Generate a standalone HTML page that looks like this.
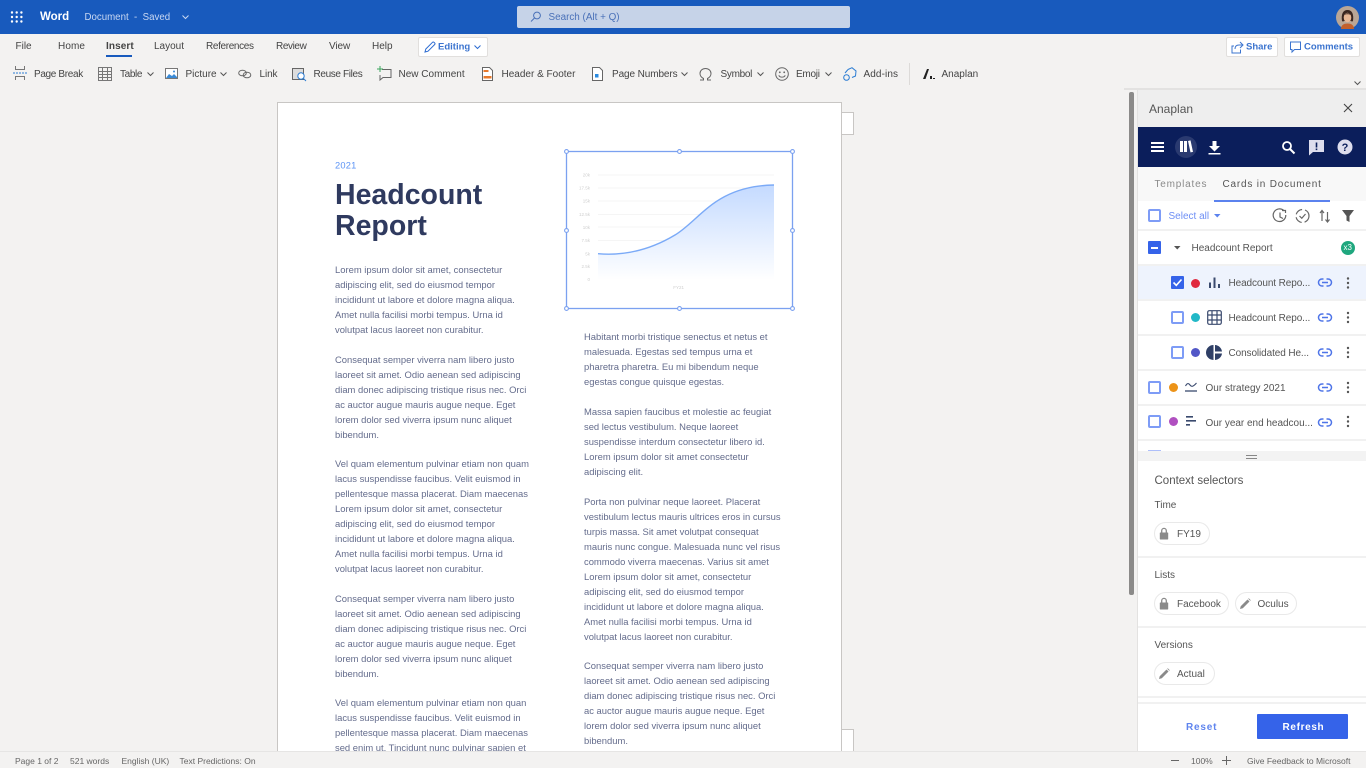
<!DOCTYPE html>
<html lang="en"><head><meta charset="utf-8"><title>Word - Anaplan</title>
<style>
*{box-sizing:border-box}
html,body{margin:0;padding:0;width:1366px;height:768px;overflow:hidden;background:#f3f2f1;font-family:"Liberation Sans",sans-serif}
body{filter:blur(.35px)}
.a{position:absolute}
.t{position:absolute;white-space:nowrap;transform:translateY(calc(-50% + 1px));line-height:1.2}
.r{font-size:10px;color:#444}
.p{font-size:9.42px;color:#646c8c;line-height:15px;white-space:pre;position:absolute}
svg{position:absolute;overflow:visible}
.line{position:absolute;left:1138px;width:228px;height:2px;background:#f1f1f1}
.cb{position:absolute;width:13px;height:13px;border:2px solid #7e9cf6;border-radius:2px;background:#fff}
.dot{position:absolute;width:9px;height:9px;border-radius:50%}
.lbl{font-size:10px;color:#555}
.chip{position:absolute;height:23px;border:1px solid #e9e9e9;border-radius:12px;background:#fff}
</style></head><body>

<!-- title bar -->
<div class="a" style="left:0;top:0;width:1366px;height:34px;background:#185abd"></div>
<svg style="left:0;top:0" width="40" height="34" fill="#fff">
<circle cx="12" cy="12.500" r="1.200"/><circle cx="16.700" cy="12.500" r="1.200"/><circle cx="21.400" cy="12.500" r="1.200"/>
<circle cx="12" cy="17" r="1.200"/><circle cx="16.700" cy="17" r="1.200"/><circle cx="21.400" cy="17" r="1.200"/>
<circle cx="12" cy="21.500" r="1.200"/><circle cx="16.700" cy="21.500" r="1.200"/><circle cx="21.400" cy="21.500" r="1.200"/>
</svg>
<div class="t" style="left:40px;top:17px;font-size:11.500px;font-weight:bold;color:#fff">Word</div>
<div class="t" style="left:84.500px;top:17px;font-size:9.700px;color:#c9d8f2">Document &nbsp;-&nbsp; Saved</div>
<svg style="left:182px;top:15px" width="8" height="5"><path d="M.5.500 3.500 3.500 6.500.500" fill="none" stroke="#c9d8f2"/></svg>
<div class="a" style="left:517px;top:6px;width:333px;height:22px;background:#c6d3e8;border-radius:2px"></div>
<svg style="left:530px;top:11px" width="12" height="12"><circle cx="7" cy="4.500" r="3.400" fill="none" stroke="#4a71b8" stroke-width="1"/><path d="M4.500 7 1 10.500" stroke="#4a71b8" stroke-width="1"/></svg>
<div class="t" style="left:548.500px;top:17px;font-size:9.900px;color:#4a71b8">Search (Alt + Q)</div>
<svg style="left:1336px;top:6px" width="23" height="23" viewBox="0 0 23 23">
<circle cx="11.500" cy="11.500" r="11.500" fill="#b9a696"/><path d="M5 23c0-4 3-5.500 6.500-5.500S18 19 18 23z" fill="#c2602c"/>
<path d="M6 15C5 8 7 4 11.500 4S18 8 17 15c-1 1-2 0-2 0l-7 0s-1 1-2 0z" fill="#3a2620"/><ellipse cx="11.500" cy="11.500" rx="3.800" ry="4.800" fill="#e7b795"/><path d="M7.500 9c2-2 6-2.500 8 0-2-1-6-1-8 0z" fill="#3a2620"/>
</svg>

<!-- menu -->
<div class="t r" style="left:15.500px;top:45.500px">File</div>
<div class="t r" style="left:58px;top:45.500px;letter-spacing:.1px">Home</div>
<div class="t r" style="left:106px;top:45.500px;font-weight:bold;letter-spacing:.1px">Insert</div>
<div class="a" style="left:106px;top:54.500px;width:26px;height:2px;background:#185abd"></div>
<div class="t r" style="left:154px;top:45.500px">Layout</div>
<div class="t r" style="left:206px;top:45.500px;letter-spacing:-.35px">References</div>
<div class="t r" style="left:276px;top:45.500px;letter-spacing:-.4px">Review</div>
<div class="t r" style="left:329px;top:45.500px;letter-spacing:-.1px">View</div>
<div class="t r" style="left:372px;top:45.500px">Help</div>
<div class="a" style="left:418px;top:37px;width:70px;height:20px;background:#fff;border:1px solid #e1dfdd;border-radius:2px"></div>
<svg style="left:424px;top:41px" width="12" height="12"><path d="M1 11l.8-3L8.500 1.300a1 1 0 0 1 1.500 0l.7.7a1 1 0 0 1 0 1.500L4 10.200z" fill="none" stroke="#2b6bd1" stroke-width="1"/></svg>
<div class="t" style="left:438px;top:46px;font-size:9.500px;font-weight:bold;color:#3b74cf">Editing</div>
<svg style="left:474px;top:45px" width="8" height="5"><path d="M.5.500 3.500 3.500 6.500.500" fill="none" stroke="#2b6bd1"/></svg>
<div class="a" style="left:1226px;top:37px;width:52px;height:20px;background:#fff;border:1px solid #e1dfdd;border-radius:2px"></div>
<svg style="left:1231px;top:41px" width="13" height="13"><path d="M9 1l3 3-3 3M12 4H8C5 4 4 6 4 8M9.500 8.500V12H1V5h2" fill="none" stroke="#3b74cf" stroke-width="1"/></svg>
<div class="t" style="left:1246px;top:46px;font-size:9.500px;font-weight:bold;color:#3b74cf">Share</div>
<div class="a" style="left:1284px;top:37px;width:76px;height:20px;background:#fff;border:1px solid #e1dfdd;border-radius:2px"></div>
<svg style="left:1290px;top:41px" width="12" height="12"><path d="M.5 1h10v7.500H4.500l-2.500 2.500V8.500H.5z" fill="none" stroke="#3b74cf" stroke-width="1"/></svg>
<div class="t" style="left:1304px;top:46px;font-size:9.500px;font-weight:bold;color:#3b74cf">Comments</div>

<!-- ribbon -->
<svg style="left:13px;top:66px" width="14" height="14" fill="none"><path d="M2.500 0v3.500h9V0M2.500 14v-3.500h9V14" stroke="#777"/><path d="M0 7h14" stroke="#2b7cd3" stroke-dasharray="2 1"/></svg>
<div class="t r" style="left:34px;top:74px;letter-spacing:-.34px">Page Break</div>
<svg style="left:98px;top:67px" width="14" height="14"><path d="M.5.500h13v13H.500zM.500 4.500h13M.500 7.500h13M.500 10.500h13M4.500 1v13M9.500 1v13" fill="none" stroke="#777"/></svg>
<div class="t r" style="left:120px;top:74px;letter-spacing:-.36px">Table</div>
<svg style="left:147px;top:72px" width="8" height="5"><path d="M.5.500 3.500 3.500 6.500.500" fill="none" stroke="#555"/></svg>
<svg style="left:165px;top:68px" width="13" height="12"><rect x=".5" y=".5" width="12" height="10" fill="#fff" stroke="#777"/><path d="M1 10l3-4 3 2 2-2 3 3v1z" fill="#3a8ad6"/><circle cx="9" cy="3.500" r="1" fill="#3a8ad6"/></svg>
<div class="t r" style="left:185.500px;top:74px">Picture</div>
<svg style="left:220px;top:72px" width="8" height="5"><path d="M.5.500 3.500 3.500 6.500.500" fill="none" stroke="#555"/></svg>
<svg style="left:238px;top:69px" width="14" height="10"><ellipse cx="4.500" cy="4" rx="3.800" ry="2.800" fill="none" stroke="#666"/><ellipse cx="9" cy="6" rx="3.800" ry="2.800" fill="none" stroke="#666"/></svg>
<div class="t r" style="left:259.500px;top:74px;letter-spacing:-.1px">Link</div>
<svg style="left:292px;top:67px" width="15" height="15"><rect x=".5" y="1.500" width="11" height="11" fill="#ddd" stroke="#666"/><circle cx="9" cy="9" r="3.200" fill="#fff" stroke="#2b7cd3"/><path d="M11.500 11.500 14 14" stroke="#2b7cd3"/></svg>
<div class="t r" style="left:313.500px;top:74px;letter-spacing:-.36px">Reuse Files</div>
<svg style="left:377px;top:66px" width="15" height="15"><path d="M5 3.500h9v8H6l-3 2.500v-5" fill="none" stroke="#666"/><path d="M3 0v6M0 3h6" stroke="#3ba55d"/></svg>
<div class="t r" style="left:398.500px;top:74px">New Comment</div>
<svg style="left:482px;top:67px" width="11" height="14"><path d="M.5.500h7l3 3v10H.5z" fill="#fff" stroke="#666"/><rect x="1.500" y="3" width="5" height="2" fill="#e8792b"/><rect x="1.500" y="9" width="8" height="2.500" fill="#e8792b"/></svg>
<div class="t r" style="left:501.500px;top:74px">Header &amp; Footer</div>
<svg style="left:592px;top:67px" width="11" height="14"><path d="M.5.500h7l3 3v10H.5z" fill="#fff" stroke="#666"/><rect x="3" y="7" width="3.500" height="3.500" fill="#2b8be0"/></svg>
<div class="t r" style="left:612px;top:74px;letter-spacing:-.1px">Page Numbers</div>
<svg style="left:681px;top:72px" width="8" height="5"><path d="M.5.500 3.500 3.500 6.500.500" fill="none" stroke="#555"/></svg>
<svg style="left:699px;top:68px" width="13" height="13"><path d="M1 12h3.500V10.500C2.500 9.500 1 7.500 1 5.500 1 2.500 3.500.5 6.500.5s5.500 2 5.500 5c0 2-1.500 4-3.500 5V12H12" fill="none" stroke="#666"/></svg>
<div class="t r" style="left:720.500px;top:74px;letter-spacing:-.3px">Symbol</div>
<svg style="left:757px;top:72px" width="8" height="5"><path d="M.5.500 3.500 3.500 6.500.500" fill="none" stroke="#555"/></svg>
<svg style="left:775px;top:67px" width="14" height="14"><circle cx="7" cy="7" r="6.300" fill="none" stroke="#666"/><circle cx="4.800" cy="5.300" r=".9" fill="#666"/><circle cx="9.200" cy="5.300" r=".9" fill="#666"/><path d="M3.800 8.300c1 2.500 5.400 2.500 6.400 0" fill="none" stroke="#666"/></svg>
<div class="t r" style="left:796px;top:74px;letter-spacing:-.25px">Emoji</div>
<svg style="left:825px;top:72px" width="8" height="5"><path d="M.5.500 3.500 3.500 6.500.500" fill="none" stroke="#555"/></svg>
<svg style="left:843px;top:67px" width="14" height="14" fill="none" stroke="#2b7cd3"><path d="M5 2.500 9 .7 13 4l-.5 5-3.500 1.500"/><circle cx="3.500" cy="10.500" r="2.800"/><path d="M5 2.500 2 6"/></svg>
<div class="t r" style="left:863.500px;top:74px;letter-spacing:.1px">Add-ins</div>
<div class="a" style="left:909px;top:63px;width:1px;height:22px;background:#dcdad8"></div>
<svg style="left:923px;top:69px" width="12" height="10"><path d="M0 10 4 0h2L2.500 10z" fill="#222"/><path d="M7 7h2v3H7zM10 9h2v1h-2z" fill="#222"/></svg>
<div class="t r" style="left:941.500px;top:74px">Anaplan</div>
<svg style="left:1354px;top:80.500px" width="8" height="5"><path d="M.5.500 3.500 3.500 6.500.500" fill="none" stroke="#555"/></svg>
<div class="a" style="left:1124px;top:88px;width:242px;height:2px;background:#e3e2e1"></div>

<!-- document -->
<div class="a" style="left:841px;top:112px;width:13px;height:23px;background:#fff;border:1px solid #c8c6c4;border-left:0"></div>
<div class="a" style="left:841px;top:729px;width:13px;height:24px;background:#fff;border:1px solid #c8c6c4;border-left:0"></div>
<div class="a" style="left:277px;top:102px;width:565px;height:660px;background:#fff;border:1px solid #c8c6c4"></div>
<div class="t" style="left:335px;top:165px;font-size:9.300px;color:#5b93f5;letter-spacing:.2px">2021</div>
<div class="a" style="left:335px;top:179.500px;font-size:28.500px;line-height:31px;font-weight:bold;color:#2f3a5f;white-space:pre">Headcount
Report</div>

<div class="p" style="left:335px;top:262px">Lorem ipsum dolor sit amet, consectetur
adipiscing elit, sed do eiusmod tempor
incididunt ut labore et dolore magna aliqua.
Amet nulla facilisi morbi tempus. Urna id
volutpat lacus laoreet non curabitur.</div>
<div class="p" style="left:335px;top:352px">Consequat semper viverra nam libero justo
laoreet sit amet. Odio aenean sed adipiscing
diam donec adipiscing tristique risus nec. Orci
ac auctor augue mauris augue neque. Eget
lorem dolor sed viverra ipsum nunc aliquet
bibendum.</div>
<div class="p" style="left:335px;top:456px">Vel quam elementum pulvinar etiam non quam
lacus suspendisse faucibus. Velit euismod in
pellentesque massa placerat. Diam maecenas
Lorem ipsum dolor sit amet, consectetur
adipiscing elit, sed do eiusmod tempor
incididunt ut labore et dolore magna aliqua.
Amet nulla facilisi morbi tempus. Urna id
volutpat lacus laoreet non curabitur.</div>
<div class="p" style="left:335px;top:591px">Consequat semper viverra nam libero justo
laoreet sit amet. Odio aenean sed adipiscing
diam donec adipiscing tristique risus nec. Orci
ac auctor augue mauris augue neque. Eget
lorem dolor sed viverra ipsum nunc aliquet
bibendum.</div>
<div class="p" style="left:335px;top:695px">Vel quam elementum pulvinar etiam non quan
lacus suspendisse faucibus. Velit euismod in
pellentesque massa placerat. Diam maecenas
sed enim ut. Tincidunt nunc pulvinar sapien et</div>

<div class="p" style="left:584px;top:329px">Habitant morbi tristique senectus et netus et
malesuada. Egestas sed tempus urna et
pharetra pharetra. Eu mi bibendum neque
egestas congue quisque egestas.</div>
<div class="p" style="left:584px;top:404px">Massa sapien faucibus et molestie ac feugiat
sed lectus vestibulum. Neque laoreet
suspendisse interdum consectetur libero id.
Lorem ipsum dolor sit amet consectetur
adipiscing elit.</div>
<div class="p" style="left:584px;top:494px">Porta non pulvinar neque laoreet. Placerat
vestibulum lectus mauris ultrices eros in cursus
turpis massa. Sit amet volutpat consequat
mauris nunc congue. Malesuada nunc vel risus
commodo viverra maecenas. Varius sit amet
Lorem ipsum dolor sit amet, consectetur
adipiscing elit, sed do eiusmod tempor
incididunt ut labore et dolore magna aliqua.
Amet nulla facilisi morbi tempus. Urna id
volutpat lacus laoreet non curabitur.</div>
<div class="p" style="left:584px;top:658px">Consequat semper viverra nam libero justo
laoreet sit amet. Odio aenean sed adipiscing
diam donec adipiscing tristique risus nec. Orci
ac auctor augue mauris augue neque. Eget
lorem dolor sed viverra ipsum nunc aliquet
bibendum.</div>

<!-- chart -->
<svg style="left:0;top:0" width="1366" height="768">
<defs><linearGradient id="g" x1="0" y1="0" x2="0" y2="1"><stop offset="0" stop-color="#c4daff"/><stop offset="1" stop-color="#ffffff"/></linearGradient></defs>
<g stroke="#f5f5f5" stroke-width="1"><path d="M598 175H774M598 188H774M598 201H774M598 214.500H774M598 227H774M598 240.500H774M598 254H774M598 266H774M598 279.500H774"/></g>
<path d="M598 253.700C625 256 650 250 675 235C700 220 715 186 774 185V280H598Z" fill="url(#g)"/>
<path d="M598 253.700C625 256 650 250 675 235C700 220 715 186 774 185" fill="none" stroke="#7baaf7" stroke-width="1.400"/>
<g font-size="4.500" fill="#cfcfcf" text-anchor="end" font-family="Liberation Sans">
<text x="590" y="176.500">20k</text><text x="590" y="189.500">17.5k</text><text x="590" y="202.500">15k</text><text x="590" y="216">12.5k</text><text x="590" y="229">10k</text><text x="590" y="242">7.5k</text><text x="590" y="255.500">5k</text><text x="590" y="268">2.5k</text><text x="590" y="281">0</text>
<text x="684" y="289">FY21</text></g>
<rect x="566.500" y="151.500" width="226" height="157" fill="none" stroke="#7ba1f0" stroke-width="1.300"/>
<g fill="#fff" stroke="#7ba1f0" stroke-width="1.100"><circle cx="566.500" cy="151.500" r="1.900"/><circle cx="679.500" cy="151.500" r="1.900"/><circle cx="792.500" cy="151.500" r="1.900"/><circle cx="566.500" cy="230.500" r="1.900"/><circle cx="792.500" cy="230.500" r="1.900"/><circle cx="566.500" cy="308.500" r="1.900"/><circle cx="679.500" cy="308.500" r="1.900"/><circle cx="792.500" cy="308.500" r="1.900"/></g>
</svg>

<!-- scrollbar & panel -->
<div class="a" style="left:1129px;top:92px;width:5px;height:503px;background:#8b8a89;border-radius:2px"></div>
<div class="a" style="left:1137px;top:90px;width:229px;height:661px;background:#fff"></div>
<div class="a" style="left:1137px;top:90px;width:1px;height:661px;background:#e3e2e1"></div>
<div class="a" style="left:1138px;top:90px;width:228px;height:37px;background:#eeeeee"></div>
<div class="t" style="left:1149px;top:108px;font-size:12px;color:#555">Anaplan</div>
<svg style="left:1343px;top:103px" width="10" height="10"><path d="M1 1l8 8M9 1 1 9" stroke="#444" stroke-width="1.100"/></svg>
<div class="a" style="left:1138px;top:127px;width:228px;height:40px;background:#0b1e5b"></div>
<svg style="left:1138px;top:127px" width="228" height="40">
<path d="M13 15h13v2H13zM13 19h13v2H13zM13 23h13v2H13z" fill="#fff"/>
<circle cx="48" cy="20" r="11" fill="#2a3a70"/>
<path d="M42 14h3v11h-3zM46 14h3v11h-3zM50 14l2.500-.6 2.500 11.500-2.500.5z" fill="#fff"/>
<path d="M74.500 14h4v5h3.500l-5.500 5.500L71 19h3.500zM70.500 26h12v1.500h-12z" fill="#fff"/>
<circle cx="149" cy="19" r="4" fill="none" stroke="#fff" stroke-width="1.800"/><path d="M152 22l4.500 4.500" stroke="#fff" stroke-width="2"/>
<path d="M171 13h15v12h-11l-4 3.500z" fill="#dde" /><path d="M177.700 15.500h1.600v5h-1.600zM177.700 21.500h1.600v1.600h-1.600z" fill="#0b1e5b"/>
<circle cx="207" cy="20" r="7.500" fill="#dde"/><text x="207" y="24" text-anchor="middle" font-size="11" font-weight="bold" fill="#0b1e5b" font-family="Liberation Sans">?</text>
</svg>
<div class="a" style="left:1138px;top:167px;width:228px;height:34px;background:#f8f8f8"></div>
<div class="t" style="left:1154.500px;top:183.500px;font-size:10px;color:#8a8a8a;letter-spacing:.8px">Templates</div>
<div class="t" style="left:1222.500px;top:183.500px;font-size:10px;color:#555;letter-spacing:.8px">Cards in Document</div>
<div class="a" style="left:1214px;top:200px;width:116px;height:1.500px;background:#5b82ee"></div>

<div class="cb" style="left:1148px;top:209px"></div>
<div class="t" style="left:1168.500px;top:216px;font-size:10px;color:#6e8ff5">Select all</div>
<svg style="left:1214px;top:214px" width="7" height="4"><path d="M0 0h6.500L3.250 3.500z" fill="#5b82ee"/></svg>
<svg style="left:1272px;top:209px" width="84" height="16" fill="none" stroke="#666" stroke-width="1.200">
<path d="M12 1.800A6.300 6.300 0 1 0 13.800 6M8 3.500V8l3 1.500"/><path d="M10 1.500h3.500V4" />
<circle cx="30.500" cy="7" r="6.500" stroke-dasharray="8 3"/><path d="M27.500 7l2.300 2.300 3.700-4.300"/>
<path d="M50 12V2M48 4l2-2.500L52 4M55.500 3v10M53.500 10.500l2 2.500 2-2.500" />
<path d="M70 1h12l-4.500 6v6l-3-1.500V7z" fill="#555" stroke="none"/>
</svg>
<div class="line" style="top:229px"></div>

<div class="a" style="left:1148px;top:241px;width:13px;height:13px;background:#3563e9;border-radius:1px"></div>
<div class="a" style="left:1151px;top:247px;width:7px;height:1.500px;background:#fff"></div>
<svg style="left:1174px;top:246px" width="7" height="4"><path d="M0 0h6.500L3.250 3.500z" fill="#555"/></svg>
<div class="t lbl" style="left:1191.500px;top:248px">Headcount Report</div>
<div class="a" style="left:1341px;top:241px;width:14px;height:14px;border-radius:50%;background:#1fa77e"></div>
<div class="t" style="left:1343.500px;top:247px;font-size:8px;color:#fff">x3</div>
<div class="line" style="top:264px"></div>

<div class="a" style="left:1138px;top:266px;width:228px;height:33px;background:#eef3fd"></div>
<div class="a" style="left:1171px;top:276px;width:13px;height:13px;background:#3563e9;border-radius:1px"></div>
<svg style="left:1171px;top:276px" width="13" height="13"><path d="M2.500 6.500 5.300 9.300 10.500 3.500" fill="none" stroke="#fff" stroke-width="1.600"/></svg>
<div class="dot" style="left:1191px;top:278.500px;background:#e0283e"></div>
<svg style="left:1208px;top:276px" width="13" height="13"><path d="M1 6.500h2V12H1zM5.500 1.500h2V12h-2zM10 8h2v4h-2z" fill="#3a4a6e"/></svg>
<div class="t lbl" style="left:1228.500px;top:283px;letter-spacing:-.1px">Headcount Repo...</div>
<div class="line" style="top:299px"></div>

<div class="cb" style="left:1171px;top:311px"></div>
<div class="dot" style="left:1191px;top:313px;background:#22b8c7"></div>
<svg style="left:1207px;top:310px" width="15" height="15"><rect x=".7" y=".7" width="13.600" height="13.600" rx="1.500" fill="none" stroke="#3a4a6e" stroke-width="1.200"/><path d="M5 1v13M10 1v13M1 5h13M1 10h13" stroke="#3a4a6e" stroke-width="1.200"/></svg>
<div class="t lbl" style="left:1228.500px;top:318px;letter-spacing:-.1px">Headcount Repo...</div>
<div class="line" style="top:334px"></div>

<div class="cb" style="left:1171px;top:346px"></div>
<div class="dot" style="left:1191px;top:348px;background:#5257c7"></div>
<svg style="left:1207px;top:345px" width="15" height="15"><path d="M6.500 0a7.500 7.500 0 0 0 0 15zM8 0a7.500 7.500 0 0 1 7 6.500H8zM8 8.500h7A7.500 7.500 0 0 1 8 15z" fill="#2f3f66"/></svg>
<div class="t lbl" style="left:1228.500px;top:353px;letter-spacing:-.1px">Consolidated He...</div>
<div class="line" style="top:369px"></div>

<div class="cb" style="left:1148px;top:381px"></div>
<div class="dot" style="left:1168.500px;top:383px;background:#ec9318"></div>
<svg style="left:1185px;top:381px" width="13" height="12"><path d="M.5 5C2 2 3.500 2 5 4S8 6 11.500 2" fill="none" stroke="#3a4a6e" stroke-width="1.100"/><path d="M0 10h12" stroke="#3a4a6e" stroke-width="1.300"/></svg>
<div class="t lbl" style="left:1205.500px;top:388px">Our strategy 2021</div>
<div class="line" style="top:404px"></div>

<div class="cb" style="left:1148px;top:415px"></div>
<div class="dot" style="left:1168.500px;top:417px;background:#b050c0"></div>
<svg style="left:1186px;top:416px" width="11" height="11"><path d="M0 0h7v1.600H0zM0 4h10v1.600H0zM0 8h4v1.600H0z" fill="#3a4a6e"/></svg>
<div class="t lbl" style="left:1205.500px;top:423px;letter-spacing:-.02px">Our year end headcou...</div>
<div class="line" style="top:439px"></div>
<div class="a" style="left:1148px;top:450px;width:13px;height:2px;background:#aebffa"></div>

<svg style="left:1318px;top:277px" width="14" height="155" fill="none" stroke="#4f75e8" stroke-width="1.500">
<path d="M5.500 2H4a3.500 3.500 0 0 0 0 7h1.500M8.500 2H10a3.500 3.500 0 0 1 0 7H8.500M4 5.500h6"/>
<path transform="translate(0,35)" d="M5.500 2H4a3.500 3.500 0 0 0 0 7h1.500M8.500 2H10a3.500 3.500 0 0 1 0 7H8.500M4 5.500h6"/>
<path transform="translate(0,70)" d="M5.500 2H4a3.500 3.500 0 0 0 0 7h1.500M8.500 2H10a3.500 3.500 0 0 1 0 7H8.500M4 5.500h6"/>
<path transform="translate(0,105)" d="M5.500 2H4a3.500 3.500 0 0 0 0 7h1.500M8.500 2H10a3.500 3.500 0 0 1 0 7H8.500M4 5.500h6"/>
<path transform="translate(0,140)" d="M5.500 2H4a3.500 3.500 0 0 0 0 7h1.500M8.500 2H10a3.500 3.500 0 0 1 0 7H8.500M4 5.500h6"/>
</svg>
<svg style="left:1345px;top:276px" width="5" height="155" fill="#555">
<circle cx="3" cy="2.500" r="1.200"/><circle cx="3" cy="7" r="1.200"/><circle cx="3" cy="11.500" r="1.200"/>
<circle cx="3" cy="37" r="1.200"/><circle cx="3" cy="41.500" r="1.200"/><circle cx="3" cy="46" r="1.200"/>
<circle cx="3" cy="72" r="1.200"/><circle cx="3" cy="76.500" r="1.200"/><circle cx="3" cy="81" r="1.200"/>
<circle cx="3" cy="107" r="1.200"/><circle cx="3" cy="111.500" r="1.200"/><circle cx="3" cy="116" r="1.200"/>
<circle cx="3" cy="141" r="1.200"/><circle cx="3" cy="145.500" r="1.200"/><circle cx="3" cy="150" r="1.200"/>
</svg>

<div class="a" style="left:1138px;top:451px;width:228px;height:10px;background:#f3f3f3"></div>
<div class="a" style="left:1246px;top:455px;width:11px;height:1px;background:#888"></div>
<div class="a" style="left:1246px;top:458px;width:11px;height:1px;background:#888"></div>

<div class="t" style="left:1154.500px;top:481px;font-size:11.500px;color:#555">Context selectors</div>
<div class="t lbl" style="left:1154.500px;top:505px">Time</div>
<div class="chip" style="left:1154px;top:522px;width:56px"></div>
<div class="t lbl" style="left:1177px;top:534px">FY19</div>
<div class="line" style="top:556px"></div>
<div class="t lbl" style="left:1154.500px;top:575px">Lists</div>
<div class="chip" style="left:1154px;top:592px;width:75px"></div>
<div class="t lbl" style="left:1177px;top:604px">Facebook</div>
<div class="chip" style="left:1235px;top:592px;width:62px"></div>
<div class="t lbl" style="left:1257.500px;top:604px">Oculus</div>
<div class="line" style="top:626px"></div>
<div class="t lbl" style="left:1154.500px;top:645px">Versions</div>
<div class="chip" style="left:1154px;top:662px;width:61px"></div>
<div class="t lbl" style="left:1177px;top:674px">Actual</div>
<div class="line" style="top:695.500px"></div>
<div class="line" style="top:702px"></div>
<svg style="left:1159px;top:527px" width="10" height="13"><path d="M2.700 6V3.700a2.300 2.300 0 0 1 4.600 0V6" fill="none" stroke="#8a8a8a" stroke-width="1.300"/><rect x=".8" y="5.500" width="8.400" height="7" rx=".6" fill="#8a8a8a"/></svg>
<svg style="left:1159px;top:597px" width="10" height="13"><path d="M2.700 6V3.700a2.300 2.300 0 0 1 4.600 0V6" fill="none" stroke="#8a8a8a" stroke-width="1.300"/><rect x=".8" y="5.500" width="8.400" height="7" rx=".6" fill="#8a8a8a"/></svg>
<svg style="left:1240px;top:598px" width="11" height="11" fill="#8a8a8a"><path d="M0 11l.7-2.800L7.500 1.500l2 2L2.800 10.300zM8.200.8l.6-.6 2 2-.6.600z"/></svg>
<svg style="left:1159px;top:668px" width="11" height="11" fill="#8a8a8a"><path d="M0 11l.7-2.800L7.500 1.500l2 2L2.800 10.300zM8.200.8l.6-.6 2 2-.6.600z"/></svg>

<div class="t" style="left:1186px;top:727px;font-size:10px;font-weight:bold;color:#5f84ee;letter-spacing:.8px">Reset</div>
<div class="a" style="left:1257px;top:714px;width:91px;height:25px;background:#3563e9;border-radius:1px"></div>
<div class="t" style="left:1282.500px;top:727px;font-size:10px;font-weight:bold;color:#fff;letter-spacing:.65px">Refresh</div>

<!-- status -->
<div class="a" style="left:0;top:751px;width:1366px;height:17px;background:#f3f2f1;border-top:1px solid #e6e5e4"></div>
<div class="t" style="left:15px;top:759.500px;font-size:8.500px;color:#666">Page 1 of 2</div>
<div class="t" style="left:70px;top:759.500px;font-size:8.500px;color:#666">521 words</div>
<div class="t" style="left:121.500px;top:759.500px;font-size:8.500px;color:#666">English (UK)</div>
<div class="t" style="left:179.500px;top:759.500px;font-size:8.500px;color:#666">Text Predictions: On</div>
<div class="a" style="left:1171px;top:759.500px;width:8px;height:1px;background:#666"></div>
<div class="t" style="left:1191px;top:759.500px;font-size:8.500px;color:#666">100%</div>
<div class="a" style="left:1222px;top:759.500px;width:9px;height:1px;background:#666"></div>
<div class="a" style="left:1226px;top:755.500px;width:1px;height:9px;background:#666"></div>
<div class="t" style="left:1247px;top:759.500px;font-size:8.500px;color:#666">Give Feedback to Microsoft</div>
</body></html>
